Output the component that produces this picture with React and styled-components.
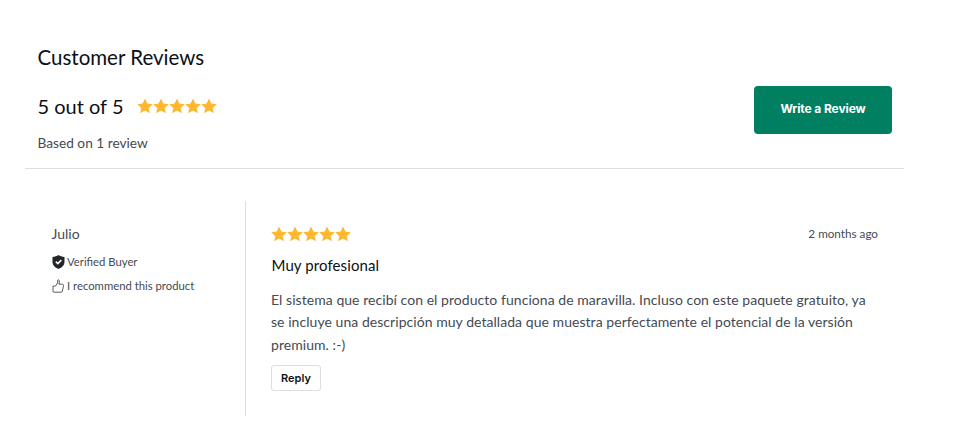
import React from "react";
import styled, { createGlobalStyle } from "styled-components";

const Global = createGlobalStyle`
  html, body { margin: 0; padding: 0; background: #fff; }
  body { font-family: "Lato", "Liberation Sans", sans-serif; color: #111; }
`;

const Page = styled.div`
  width: 879px;
  margin-left: 25px;
  padding-top: 44px;
`;

const Header = styled.header`
  display: flex;
  justify-content: space-between;
  align-items: center;
  padding: 0 12px 0 12.5px;
  height: 124px;
  border-bottom: 1px solid #dedede;
`;

const Summary = styled.div`
  display: flex;
  flex-direction: column;
  align-self: flex-start;
`;

const Title = styled.h2`
  margin: 0;
  font-size: 20.5px;
  font-weight: 400;
  line-height: 26px;
  color: #0c1016;
`;

const ScoreRow = styled.div`
  display: flex;
  align-items: center;
  gap: 14px;
  margin-top: 23px;
`;

const Score = styled.span`
  font-size: 20px;
  line-height: 26px;
  color: #0c1016;
`;

const Based = styled.p`
  margin: 14px 0 0;
  font-size: 13.7px;
  line-height: 20px;
  color: #444a52;
`;

const WriteButton = styled.button`
  width: 138px;
  height: 48px;
  margin-top: 8px;
  padding: 0 0 3px;
  border: 0;
  border-radius: 4px;
  background: #008060;
  color: #fff;
  font-family: "Inter", sans-serif;
  font-size: 12px;
  font-weight: 700;
  letter-spacing: -0.1px;
`;

const Review = styled.article`
  display: flex;
  margin-top: 32px;
  height: 215px;
`;

const Author = styled.aside`
  width: 221px;
  box-sizing: border-box;
  padding: 24px 0 0 26.5px;
  border-right: 1px solid #dedede;
  flex: none;
`;

const AuthorName = styled.div`
  font-size: 14px;
  line-height: 18px;
  color: #444a52;
`;

const Badge = styled.div`
  display: flex;
  align-items: center;
  gap: 2.500px;
  margin-top: ${(p) => p.$top}px;
  font-size: 11.3px;
  line-height: 16px;
  color: #444a52;
`;

const Body = styled.div`
  flex: 1;
  padding: 24px 26px 0 25px;
`;

const BodyTop = styled.div`
  display: flex;
  justify-content: space-between;
  align-items: center;
  height: 18px;
`;

const Age = styled.span`
  margin-bottom: 3px;
  font-size: 11.7px;
  color: #444a52;
`;

const ReviewTitle = styled.h3`
  margin: 12px 0 0 0.5px;
  font-size: 15px;
  font-weight: 400;
  line-height: 20px;
  letter-spacing: 0.1px;
  color: #0c1016;
`;

const ReviewText = styled.p`
  margin: 14px 0 0;
  font-size: 14px;
  line-height: 22.4px;
  letter-spacing: 0.05px;
  color: #444a52;
`;

const ReplyButton = styled.button`
  display: block;
  width: 50px;
  height: 26px;
  margin-top: 9px;
  padding: 0 0 1px;
  border: 1px solid #dedede;
  border-radius: 3px;
  background: #fff;
  color: #111;
  font-family: "Inter", sans-serif;
  font-size: 11px;
  font-weight: 600;
`;

const StarRow = styled.span`
  display: inline-flex;
  line-height: 0;
`;

const Stars = () => (
  <StarRow>
    {[0, 1, 2, 3, 4].map((i) => (
      <svg key={i} width="16" height="16" viewBox="0 0 24 24" aria-hidden="true">
        <path fill="#ffb82e" d="M12 .8l3.5 7.5 8.2 1-6.100 5.600 1.700 8.100L12 18.900 4.700 23l1.700-8.100L.3 9.300l8.200-1z" />
      </svg>
    ))}
  </StarRow>
);

const Shield = () => (
  <svg width="13" height="14" viewBox="0 0 13 14" aria-hidden="true">
    <path fill="#22262b" d="M6.500 0C8 1.100 10.200 1.800 12.500 1.900v5.200c0 3-2.400 5.600-6 6.900-3.600-1.300-6-3.900-6-6.900V1.900C2.800 1.800 5 1.100 6.500 0z" />
    <path fill="none" stroke="#fff" strokeWidth="1.500" d="M3.800 6.600l2 2 3.500-3.500" />
  </svg>
);

const Thumb = () => (
  <svg width="13" height="14" viewBox="0 0 13 14" aria-hidden="true">
    <path fill="none" stroke="#444a52" strokeWidth="0.9" strokeLinejoin="round" d="M1 7.200l2.600-.3 2-2.900V1.300c0-.7 1.500-.8 1.700.4.200 1-.1 2.600-.4 3.500h3.600c.9 0 1.200.8 1 1.400l-1.100 5.400c-.2.700-.6 1.200-1.300 1.200H1.900c-.6 0-.9-.4-.9-.9z" />
  </svg>
);

export default function App() {
  return (
    <>
      <Global />
      <Page>
        <Header>
          <Summary>
            <Title>Customer Reviews</Title>
            <ScoreRow>
              <Score>5 out of 5</Score>
              <Stars />
            </ScoreRow>
            <Based>Based on 1 review</Based>
          </Summary>
          <WriteButton>Write a Review</WriteButton>
        </Header>
        <Review>
          <Author>
            <AuthorName>Julio</AuthorName>
            <Badge $top={11}><Shield />Verified Buyer</Badge>
            <Badge $top={8}><Thumb />I recommend this product</Badge>
          </Author>
          <Body>
            <BodyTop>
              <Stars />
              <Age>2 months ago</Age>
            </BodyTop>
            <ReviewTitle>Muy profesional</ReviewTitle>
            <ReviewText>
              El sistema que recibí con el producto funciona de maravilla. Incluso con este paquete gratuito, ya se incluye una descripción muy detallada que muestra perfectamente el potencial de la versión premium. :-)
            </ReviewText>
            <ReplyButton>Reply</ReplyButton>
          </Body>
        </Review>
      </Page>
    </>
  );
}
